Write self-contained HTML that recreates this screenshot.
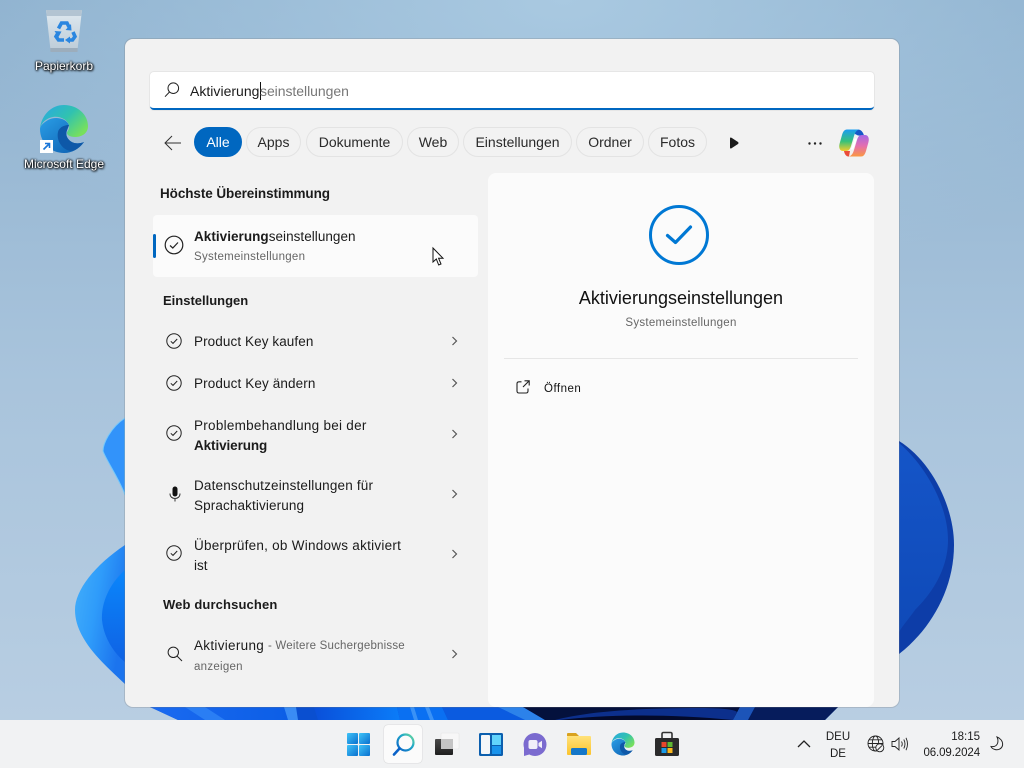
<!DOCTYPE html>
<html lang="de"><head><meta charset="utf-8"><title>Windows Suche</title>
<style>
html,body{margin:0;padding:0;width:1024px;height:768px;overflow:hidden;background:#a6c2da;font-family:"Liberation Sans",sans-serif;color:#1b1b1b}
.t{position:absolute;white-space:nowrap;font-size:13.5px;line-height:20px}
svg{position:absolute;overflow:visible}
.chip{position:absolute;top:127px;height:30px;box-sizing:border-box;border:1px solid #e3e3e3;border-radius:16px;text-align:center;line-height:29px;font-size:14px;color:#2a2a2a}
.g{color:#666}
.dt{color:#fff;font-size:12px;text-shadow:0 0 2px #000,0 0 2px #000,1px 1px 2px #000;text-align:center;position:absolute;white-space:nowrap}
.h{font-weight:bold;font-size:13px;color:#1b1b1b}
.s{font-size:11.5px;letter-spacing:.27px}
</style></head><body>
<svg width="1024" height="768" style="left:0;top:0">
<defs>
<linearGradient id="bg" x1="0" y1="0" x2="0" y2="1"><stop offset="0" stop-color="#8fb2cf"/><stop offset=".5" stop-color="#a9c4dc"/><stop offset="1" stop-color="#bacfe3"/></linearGradient>
<radialGradient id="bg2" cx=".55" cy="0" r=".6"><stop offset="0" stop-color="#a9c9e1"/><stop offset="1" stop-color="#a9c9e1" stop-opacity="0"/></radialGradient>
<linearGradient id="bl" x1="0" y1="0" x2="1" y2=".5"><stop offset="0" stop-color="#45b0fb"/><stop offset=".5" stop-color="#2f9cfa"/><stop offset="1" stop-color="#1c74ee"/></linearGradient>
<linearGradient id="bi" x1="0" y1="0" x2="0" y2="1"><stop offset="0" stop-color="#0a86fb"/><stop offset="1" stop-color="#0f62e4"/></linearGradient>
<linearGradient id="brd" x1="0" y1="0" x2="0" y2="1"><stop offset="0" stop-color="#1555c8"/><stop offset="1" stop-color="#0f4ab8"/></linearGradient>
<linearGradient id="band1" x1="0" y1="0" x2="1" y2="0"><stop offset="0" stop-color="#0a50da"/><stop offset="1" stop-color="#0b7cf8"/></linearGradient>
<linearGradient id="band0" x1="0" y1="0" x2="1" y2="0"><stop offset="0" stop-color="#1a6af0"/><stop offset="1" stop-color="#0c5ee6"/></linearGradient>
<linearGradient id="ed" x1="0" y1="0" x2="1" y2=".7"><stop offset="0" stop-color="#2aa6e6"/><stop offset=".55" stop-color="#30c2b0"/><stop offset="1" stop-color="#78e05c"/></linearGradient>
<linearGradient id="ed2" x1="0" y1="0" x2="1" y2="1"><stop offset="0" stop-color="#2a9ee6"/><stop offset="1" stop-color="#0c5cae"/></linearGradient>
<linearGradient id="cp1" x1="0" y1="0" x2="0" y2="1"><stop offset="0" stop-color="#1a9cf2"/><stop offset=".55" stop-color="#37c27a"/><stop offset="1" stop-color="#f4cc2c"/></linearGradient>
<linearGradient id="cp2" x1="0" y1="0" x2="0" y2="1"><stop offset="0" stop-color="#a468e4"/><stop offset=".5" stop-color="#e46eb0"/><stop offset="1" stop-color="#fb9840"/></linearGradient>
<linearGradient id="win" x1="0" y1="0" x2="1" y2="1"><stop offset="0" stop-color="#3fc4f8"/><stop offset="1" stop-color="#0a70cf"/></linearGradient>
<linearGradient id="sr" x1="0" y1="1" x2="1" y2="0"><stop offset="0" stop-color="#0a62c8"/><stop offset=".6" stop-color="#1fa8c8"/><stop offset="1" stop-color="#6fdc9a"/></linearGradient>
<linearGradient id="fo" x1="0" y1="0" x2="0" y2="1"><stop offset="0" stop-color="#ffe27a"/><stop offset="1" stop-color="#fbc32c"/></linearGradient>
<linearGradient id="bin" x1="0" y1="0" x2="0" y2="1"><stop offset="0" stop-color="#dfe9f0"/><stop offset="1" stop-color="#bccbd7"/></linearGradient>
<linearGradient id="td" x1="0" y1="0" x2="0" y2="1"><stop offset="0" stop-color="#4a4a4a"/><stop offset="1" stop-color="#1e1e1e"/></linearGradient>
</defs>
<rect width="1024" height="768" fill="url(#bg)"/><rect width="1024" height="500" fill="url(#bg2)"/>
<path d="M125 418C110 428 103 444 103 451C106 460 120 480 125 495Z" fill="#3293fa" stroke="#74c8fb" stroke-width="1"/>
<path d="M125 545C95 565 75 590 75 610C75 640 105 665 125 684Z" fill="url(#bl)"/>
<path d="M125 570C108 585 101 605 102 620C104 640 116 655 125 662Z" fill="url(#bi)"/>
<path d="M899 441C930 460 954 505 954 545C954 590 930 630 899 654Z" fill="#0d3da8"/>
<path d="M899 443C925 465 948 505 948 540C948 575 925 600 915 610C908 620 903 625 899 632Z" fill="url(#brd)"/>
<path d="M150 707H838L825 720H178Z" fill="#0a4fd0"/>
<path d="M150 707H284L290 720H178Z" fill="url(#band0)"/>
<path d="M185 707H205L225 720H205Z" fill="#2a7ef4"/>
<path d="M284 707H296L298 720H288Z" fill="#3a8cf4"/>
<path d="M314 707H397L400 720H318Z" fill="url(#band1)"/>
<path d="M397 707H442L448 720H400Z" fill="#0a70f2"/>
<path d="M410 707H414L418 720H414ZM425 707H429L434 720H430Z" fill="#3a92f6"/>
<path d="M442 707H498L525 720H448Z" fill="#0b5be0"/>
<path d="M498 707H523L545 720H525Z" fill="#2c82ea"/>
<path d="M523 707H740L733 720H545Z" fill="#04113d"/>
<path d="M555 720C590 711 640 708 700 708C725 708 735 710 737 712L733 720Z" fill="#0c2f8c"/>
<path d="M560 720C610 714 670 714 733 720Z" fill="#030a2b"/>
<path d="M740 707H755L748 720H733Z" fill="#1c54b8"/>
<path d="M755 707H838L825 720H748Z" fill="#061c5c"/>
</svg>

<!-- Desktop icons -->
<svg width="36" height="42" style="left:46px;top:10px" viewBox="0 0 36 42">
<path d="M0 0H36L31.5 40Q31 42 29 42H7Q5 42 4.5 40Z" fill="url(#bin)"/><path d="M0 0H36L35.3 6H.7Z" fill="#b3c4d2"/><path d="M4.2 38H31.8L31.5 42H4.5Z" fill="#9cadbc"/>
<g fill="none" stroke="#2a86e0" stroke-width="3.6"><path d="M12.5 18.5L15.5 13H21L23 17"/><path d="M27 22L29 26.5L26.5 30H22"/><path d="M18 30H12.5L10 26.5L12 23"/></g>
<g fill="#2a86e0"><path d="M25.5 20.5L19.5 20L25 14Z"/><path d="M24 33.5V26.5L19 30Z"/><path d="M8.5 21L15.5 21.5L12.5 27Z"/></g>
</svg>
<div class="dt" style="left:14px;top:58px;width:100px;line-height:16px">Papierkorb</div>
<svg width="50" height="50" style="left:39px;top:104px" viewBox="0 0 50 50">
<path d="M1 25C1 39 12 49 25 49C33 49 40 45 45 38C38 41 31 39 28 33C26 28 29 25 30 21C27 14 16 12 9 16C4 19 1 22 1 25Z" fill="url(#ed2)"/>
<path d="M19 28C17 37 24 47 33 47C38 46 42 42 45 38C38 41 31 39 28 33C26 28 29 25 30 21C26 21 20 23 19 28Z" fill="#0e58a8"/>
<path d="M1 24C3 10 13 1 25 1C39 1 49 11 49 22C49 30 42 33 36 33C31 33 28 31 28 29C28 27 31 26 30 21C28 15 20 12 14 13C8 14 3 18 1 24Z" fill="url(#ed)"/>
</svg>
<svg width="13" height="13" style="left:40px;top:140px"><rect width="13" height="13" fill="#fff"/><path d="M3.5 9.5L9 4M5 3.5H9.5V8" fill="none" stroke="#1a76d8" stroke-width="1.6"/></svg>
<div class="dt" style="left:14px;top:156px;width:100px;line-height:16px">Microsoft Edge</div>

<!-- Panel -->
<div style="position:absolute;left:125px;top:39px;width:774px;height:668px;background:#f2f2f2;border-radius:8px;box-shadow:0 0 0 1px rgba(120,120,120,.25)"></div>
<div style="position:absolute;left:488px;top:173px;width:386px;height:534px;background:#fbfbfb;border-radius:8px"></div>

<!-- Search box -->
<div style="position:absolute;left:150px;top:72px;width:724px;height:38px;box-sizing:border-box;background:#fff;border-radius:4px;box-shadow:0 0 0 1px #e6e6e6;border-bottom:2px solid #0067c0"></div>
<svg width="16" height="16" style="left:164px;top:82px" viewBox="0 0 16 16" fill="none" stroke="#222" stroke-width="1"><circle cx="9.3" cy="6.2" r="5.3"/><path d="M5.5 10L1 14.7"/></svg>
<div class="t" style="left:190px;top:81px;font-size:14px;letter-spacing:.02px">Aktivierung</div>
<div style="position:absolute;left:260px;top:82px;width:1px;height:18px;background:#111"></div>
<div class="t" style="left:260px;top:81px;font-size:14px;color:#777;letter-spacing:-.05px">seinstellungen</div>

<!-- Chips row -->
<svg width="18" height="16" style="left:164px;top:135px" viewBox="0 0 18 16" fill="none" stroke="#333" stroke-width="1"><path d="M17 8H1M8 1L1 8L8 15"/></svg>
<div class="chip" style="left:194px;width:48px;background:#0067c0;border-color:#0067c0;color:#fff">Alle</div>
<div class="chip" style="left:246px;width:55px">Apps</div>
<div class="chip" style="left:306px;width:97px">Dokumente</div>
<div class="chip" style="left:407px;width:52px">Web</div>
<div class="chip" style="left:463px;width:109px">Einstellungen</div>
<div class="chip" style="left:576px;width:68px">Ordner</div>
<div class="chip" style="left:648px;width:59px">Fotos</div>
<svg width="10" height="12" style="left:729px;top:137px" viewBox="0 0 10 12"><path d="M1 1.5Q1 0 2.5 .8L9 5Q10 6 9 7L2.5 11.2Q1 12 1 10.5Z" fill="#1b1b1b"/></svg>
<svg width="14" height="3" style="left:808px;top:142px"><circle cx="1.5" cy="1.5" r="1.2" fill="#222"/><circle cx="7" cy="1.5" r="1.2" fill="#222"/><circle cx="12.5" cy="1.5" r="1.2" fill="#222"/></svg>
<svg width="30" height="28" style="left:839px;top:129px" viewBox="0 0 30 28">
<path d="M14 .5H19C22 .5 24 3 25 6.5H19L16 5Z" fill="#1657c8"/>
<path d="M8 .5C5 .5 4 3 3 6L.5 15C-.5 19 1 22 4 22H7C10 22 11 20 12 17L15 7C16 4 17 1.5 20 .5Z" fill="url(#cp1)"/>
<path d="M22 27.5C25 27.5 26 25 27 22L29.5 13C30.5 9 29 6 26 6H23C20 6 19 8 18 11L15 21C14 24 13 26.5 10 27.5Z" fill="url(#cp2)"/>
<path d="M5 22H11L10 27.5H9.5C7 27.5 5.5 25 5 22Z" fill="#ea4c3a"/>
<path d="M15.5 9.5H18C17 12 15.5 18 14 20.5H11.5C13 18 14.5 13 15.5 9.5Z" fill="#fff"/>
</svg>

<!-- Left list -->
<div class="t h" style="left:160px;top:184px;font-size:13.5px;letter-spacing:-.08px">Höchste Übereinstimmung</div>
<div style="position:absolute;left:153px;top:215px;width:325px;height:62px;background:#fbfbfb;border-radius:4px"></div>
<div style="position:absolute;left:153px;top:234px;width:3px;height:24px;background:#0067c0;border-radius:2px"></div>
<svg width="20" height="20" style="left:164px;top:235px" viewBox="0 0 20 20" fill="none" stroke="#222" stroke-width="1.2"><circle cx="10" cy="10" r="8.8"/><path d="M6 10.5L8.8 13L14 7.5"/></svg>
<div class="t" style="left:194px;top:227px;letter-spacing:.04px"><b>Aktivierung</b>seinstellungen</div>
<div class="t g s" style="left:194px;top:247px">Systemeinstellungen</div>
<svg width="14" height="20" style="left:432px;top:247px" viewBox="0 0 14 20"><path d="M1 1V15L4.3 12L6.7 18L9 17L6.6 11.3H11Z" fill="#fff" stroke="#111" stroke-width="1"/></svg>

<div class="t h" style="left:163px;top:291px">Einstellungen</div>
<svg width="16" height="16" style="left:166px;top:333px" viewBox="0 0 16 16" fill="none" stroke="#222" stroke-width="1"><circle cx="8" cy="8" r="7.2"/><path d="M4.8 8.3L7 10.4L11.2 6"/></svg>
<div class="t" style="left:194px;top:332px;letter-spacing:.09px">Product Key kaufen</div>
<svg width="16" height="16" style="left:166px;top:375px" viewBox="0 0 16 16" fill="none" stroke="#222" stroke-width="1"><circle cx="8" cy="8" r="7.2"/><path d="M4.8 8.3L7 10.4L11.2 6"/></svg>
<div class="t" style="left:194px;top:374px;letter-spacing:.12px">Product Key ändern</div>
<svg width="16" height="16" style="left:166px;top:425px" viewBox="0 0 16 16" fill="none" stroke="#222" stroke-width="1"><circle cx="8" cy="8" r="7.2"/><path d="M4.8 8.3L7 10.4L11.2 6"/></svg>
<div class="t" style="left:194px;top:416px;letter-spacing:.27px">Problembehandlung bei der</div>
<div class="t" style="left:194px;top:436px;letter-spacing:-.1px"><b>Aktivierung</b></div>
<svg width="14" height="16" style="left:168px;top:486px" viewBox="0 0 14 16"><rect x="4.5" y=".5" width="5" height="10" rx="2.5" fill="#111"/><path d="M2 7.5C2 11 4.5 12.5 7 12.5C9.5 12.5 12 11 12 7.5M7 12.5V15.5" fill="none" stroke="#333" stroke-width="1"/></svg>
<div class="t" style="left:194px;top:476px;letter-spacing:.18px">Datenschutzeinstellungen für</div>
<div class="t" style="left:194px;top:496px;letter-spacing:.12px">Sprachaktivierung</div>
<svg width="16" height="16" style="left:166px;top:545px" viewBox="0 0 16 16" fill="none" stroke="#222" stroke-width="1"><circle cx="8" cy="8" r="7.2"/><path d="M4.8 8.3L7 10.4L11.2 6"/></svg>
<div class="t" style="left:194px;top:536px;letter-spacing:.26px">Überprüfen, ob Windows aktiviert</div>
<div class="t" style="left:194px;top:556px">ist</div>
<div class="t h" style="left:163px;top:595px;letter-spacing:.13px">Web durchsuchen</div>
<svg width="16" height="16" style="left:167px;top:646px" viewBox="0 0 16 16" fill="none" stroke="#222" stroke-width="1"><circle cx="6.3" cy="6.3" r="5.2"/><path d="M10 10L15 15"/></svg>
<div class="t" style="left:194px;top:636px;letter-spacing:.3px">Aktivierung</div>
<div class="t g s" style="left:268px;top:636px;letter-spacing:.2px">- Weitere Suchergebnisse</div>
<div class="t g s" style="left:194px;top:657px">anzeigen</div>
<svg width="8" height="330" style="left:451px;top:336px" fill="none" stroke="#555" stroke-width="1.2">
<path d="M1.5 1L5.5 5L1.5 9"/><path d="M1.5 43L5.5 47L1.5 51"/><path d="M1.5 94L5.5 98L1.5 102"/><path d="M1.5 154L5.5 158L1.5 162"/><path d="M1.5 214L5.5 218L1.5 222"/><path d="M1.5 314L5.5 318L1.5 322"/></svg>

<!-- Right pane -->
<svg width="62" height="62" style="left:648px;top:204px" viewBox="0 0 62 62" fill="none" stroke="#0078d4"><circle cx="31" cy="31" r="28.5" stroke-width="3"/><path d="M19.5 31.5L27.5 38.5L42.5 23" stroke-width="3.2" stroke-linecap="round" stroke-linejoin="round"/></svg>
<div class="t" style="left:488px;width:386px;text-align:center;top:288px;font-size:18px;color:#111">Aktivierungseinstellungen</div>
<div class="t g s" style="left:488px;width:386px;text-align:center;top:313px">Systemeinstellungen</div>
<div style="position:absolute;left:504px;top:358px;width:354px;height:1px;background:#e6e6e6"></div>
<svg width="14" height="14" style="left:516px;top:380px" viewBox="0 0 14 14" fill="none" stroke="#222" stroke-width="1.1"><path d="M5.5 1.8H3Q1 1.8 1 3.8V11Q1 13 3 13H10Q12 13 12 11V8.5M7 7L13 1M8.5 .8H13.2V5.5"/></svg>
<div class="t" style="left:544px;top:379px;font-size:11.5px;color:#111;letter-spacing:.5px">Öffnen</div>

<!-- Taskbar -->
<div style="position:absolute;left:0;top:720px;width:1024px;height:48px;background:#f1f2f3"></div>
<div style="position:absolute;left:384px;top:725px;width:38px;height:38px;background:#fbfbfb;border-radius:4px;box-shadow:0 0 1px rgba(0,0,0,.3)"></div>
<svg width="24" height="24" style="left:347px;top:733px" fill="url(#win)"><rect width="11" height="11" rx="1"/><rect x="12" width="11" height="11" rx="1"/><rect y="12" width="11" height="11" rx="1"/><rect x="12" y="12" width="11" height="11" rx="1"/></svg>
<svg width="24" height="24" style="left:392px;top:733px" viewBox="0 0 24 24" fill="none" stroke="url(#sr)"><circle cx="13.5" cy="9.5" r="8" stroke-width="2.2"/></svg>
<svg width="24" height="24" style="left:392px;top:733px" viewBox="0 0 24 24" fill="none"><path d="M7.5 15.5L2 21.5" stroke="#0a62c8" stroke-width="2.6" stroke-linecap="round"/></svg>
<svg width="24" height="24" style="left:435px;top:733px"><rect x="6" width="18" height="16" rx="1" fill="#f7f7f7" stroke="#e5e5e5" stroke-width=".6"/><rect y="6" width="18" height="16" rx="1" fill="url(#td)"/><rect x="6" y="6" width="12" height="10" fill="#c4c4c4"/></svg>
<svg width="24" height="24" style="left:479px;top:733px"><rect width="24" height="23" rx="1.5" fill="#0c5fae"/><rect x="2" y="2" width="9" height="19" rx="1" fill="#f4f6f8"/><rect x="13" y="2" width="9" height="10" fill="#62d4fb"/><rect x="13" y="13" width="9" height="8" fill="#1a94ec"/></svg>
<svg width="24" height="24" style="left:523px;top:733px"><circle cx="12" cy="11.5" r="11.5" fill="#7b6bcf"/><path d="M1 12L1 23L8 21Z" fill="#7b6bcf"/><rect x="5.5" y="7" width="9" height="9" rx="2" fill="#f1eef9"/><path d="M15.5 10L19 7.8V15.2L15.5 13Z" fill="#f1eef9"/></svg>
<svg width="26" height="24" style="left:567px;top:732px"><path d="M0 2Q0 1 1 1H9L12 4H0Z" fill="#d9a21f"/><rect y="4" width="24" height="19" rx="1" fill="url(#fo)"/><rect x="4" y="16" width="16" height="7" rx="1.5" fill="#1577c8"/></svg>
<svg width="24" height="24" style="left:611px;top:732px" viewBox="0 0 50 50">
<path d="M1 25C1 39 12 49 25 49C33 49 40 45 45 38C38 41 31 39 28 33C26 28 29 25 30 21C27 14 16 12 9 16C4 19 1 22 1 25Z" fill="url(#ed2)"/>
<path d="M19 28C17 37 24 47 33 47C38 46 42 42 45 38C38 41 31 39 28 33C26 28 29 25 30 21C26 21 20 23 19 28Z" fill="#0e58a8"/>
<path d="M1 24C3 10 13 1 25 1C39 1 49 11 49 22C49 30 42 33 36 33C31 33 28 31 28 29C28 27 31 26 30 21C28 15 20 12 14 13C8 14 3 18 1 24Z" fill="url(#ed)"/></svg>
<svg width="24" height="26" style="left:655px;top:731px"><path d="M7 7V3Q7 1.5 8.5 1.5H15.5Q17 1.5 17 3V7" fill="none" stroke="#333" stroke-width="1.6"/><rect y="7" width="24" height="18" rx="1.5" fill="#2b2b2b"/><rect x="6.5" y="11" width="5" height="5" fill="#e8452c"/><rect x="12.5" y="11" width="5" height="5" fill="#5fb832"/><rect x="6.5" y="17" width="5" height="5" fill="#1a9be8"/><rect x="12.5" y="17" width="5" height="5" fill="#fbb81c"/></svg>

<svg width="14" height="8" style="left:797px;top:740px" fill="none" stroke="#222" stroke-width="1.3"><path d="M1 7L7 1L13 7"/></svg>
<div class="t" style="left:818px;width:40px;text-align:center;top:729px;font-size:11.5px;line-height:16px">DEU</div>
<div class="t" style="left:818px;width:40px;text-align:center;top:746px;font-size:11.5px;line-height:16px">DE</div>
<svg width="18" height="18" style="left:867px;top:735px" viewBox="0 0 18 18" fill="none" stroke="#222" stroke-width=".9"><circle cx="8.5" cy="8.5" r="7.5"/><ellipse cx="8.5" cy="8.5" rx="3.2" ry="7.5"/><path d="M1 8.5H16M2 4.8H15M2 12.2H9"/><circle cx="12.8" cy="12.8" r="4" fill="#f1f2f3"/><path d="M10.5 15L15 10.6"/></svg>
<svg width="18" height="16" style="left:891px;top:736px" viewBox="0 0 18 16" fill="none" stroke="#222" stroke-width=".9"><path d="M1 5.5H4L8 2V14L4 10.5H1Z"/><path d="M10.5 5.5Q12 8 10.5 10.5M12.8 3.5Q15.2 8 12.8 12.5M15 1.8Q18 8 15 14.2"/></svg>
<div class="t" style="left:900px;width:80px;text-align:right;top:728px;font-size:11.5px;line-height:18px">18:15</div>
<div class="t" style="left:900px;width:80px;text-align:right;top:744px;font-size:11.5px;line-height:18px;letter-spacing:-.1px">06.09.2024</div>
<svg width="14" height="15" style="left:990px;top:736px" viewBox="0 0 14 15" fill="none" stroke="#222" stroke-width="1"><path d="M7 1C10 2 13 5 12.6 9C12 12.5 8.5 14.5 5 13.5C3 13 1.5 12 1 10.5C4 11 6.5 10 7.5 7.5C8.3 5.2 8 3 7 1Z"/></svg>
</body></html>
